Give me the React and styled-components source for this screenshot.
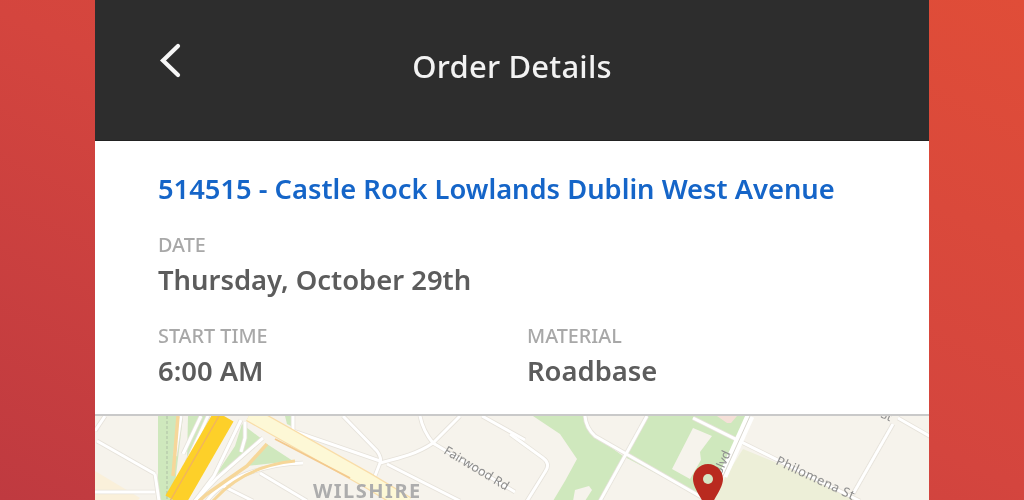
import React from "react";
import styled, { createGlobalStyle } from "styled-components";

const Global = createGlobalStyle`
  html, body { margin: 0; padding: 0; height: 500px; overflow: hidden; }
  body { font-family: "Noto Sans", "Open Sans", sans-serif; }
`;

const Page = styled.div`
  width: 1024px;
  height: 500px;
  display: flex;
  justify-content: center;
  overflow: hidden;
  background: linear-gradient(205deg, #e04d38 0%, #d4453e 50%, #bf3a40 100%);
`;

const Phone = styled.main`
  width: 834px;
  height: 500px;
  display: flex;
  flex-direction: column;
  background: #fff;
`;

const Header = styled.header`
  height: 141px;
  flex: none;
  box-sizing: border-box;
  border-bottom: 1px solid #222;
  background: #2d2d2d;
  display: grid;
  grid-template-columns: 120px 1fr 120px;
  align-items: center;
`;

const Back = styled.button`
  justify-self: start;
  margin: 0 0 0 62px;
  padding: 0;
  border: 0;
  background: none;
  display: flex;
  position: relative;
  top: -9px;
`;

const Title = styled.h1`
  margin: 0;
  text-align: center;
  color: #f2f2f2;
  font-size: 31px;
  font-weight: 500;
  letter-spacing: 0.2px;
  position: relative;
  top: -4px;
  filter: blur(0.5px);
`;

const Details = styled.section`
  height: 275px;
  flex: none;
  box-sizing: border-box;
  padding: 28px 62px 0 63px;
  border-bottom: 2px solid #c9c9c9;
  filter: blur(0.5px);
`;

const OrderLink = styled.a`
  display: block;
  color: #1565c8;
  font-size: 27.3px;
  line-height: 40px;
  font-weight: 600;
  white-space: nowrap;
`;

const Fields = styled.div`
  display: grid;
  grid-template-columns: 369px 1fr;
  row-gap: 18px;
  margin-top: 24px;
`;

const Field = styled.div`
  grid-column: ${(p) => (p.$wide ? "1 / -1" : "auto")};
`;

const Label = styled.div`
  color: #a8a8a8;
  font-size: 19.8px;
  line-height: 24px;
  font-weight: 500;
`;

const Value = styled.div`
  color: #5c5c5c;
  font-size: 27.4px;
  line-height: 46px;
  height: 49px;
  font-weight: 600;
`;

const MapArea = styled.div`
  flex: 1;
  min-height: 0;
  background: #f6f3ec;
  overflow: hidden;
`;

const MapSvg = styled.svg`
  display: block;
  width: 834px;
  height: 84px;
  filter: blur(0.6px);
`;

const ROADS = [
  "M10 0 L0 15",
  "M2 25 L60 58",
  "M198 0 V15 L285 45",
  "M248 0 L282 35 Q287 42 285 47 L278 65",
  "M285 47 C305 42 322 38 338 27 L365 0",
  "M325 0 Q328 15 338 27 L420 76",
  "M387 0 L430 24",
  "M292 48 L365 85",
  "M165 57 L212 85",
  "M128 70 L158 85",
  "M112 85 C128 62 170 48 208 47",
  "M415 18 L448 42 Q456 48 450 56 L432 85",
  "M490 0 Q491 12 500 20 L608 82",
  "M552 0 L505 85",
  "M598 2 L765 85",
  "M798 8 L758 78",
  "M803 2 L836 21",
  "M60 58 L64 85",
  "M86 0 L80 40",
  "M113 0 L92 46",
  "M106 0 L88 38",
  "M146 4 L119 60 L100 85",
  "M150 6 L150 22 L146 36",
  "M168 22 L122 62 L100 85",
  "M0 76 L60 76",
];

function MapArt() {
  const mapText = {
    fontFamily: "'Noto Sans', sans-serif",
    fill: "#8d8d8d",
  };
  return (
    <MapSvg viewBox="0 0 834 84" aria-label="Map">
      <rect width="834" height="85" fill="#f6f3ec" />
      <path d="M0 55 L45 82 L42 85 H0Z" fill="#faf0da" />
      <path d="M63 0 H88 L78 85 H63Z" fill="#cfe8bd" />
      <path d="M93 0 H113 L92 44Z" fill="#cfe8bd" />
      <path d="M147 8 L168 24 L120 60 L140 30Z" fill="#cfe8bd" />
      <path d="M172 28 L198 45 L152 50Z" fill="#cfe8bd" />
      <path d="M190 0 H200 V12 L192 8Z" fill="#cfe8bd" />
      <path d="M438 0 H490 Q491 12 500 20 L528 40 L505 85 H458 L470 65 L482 43 L465 18Z" fill="#cfe8bd" />
      <path d="M478 85 L480 74 L494 70 L497 74 L490 85Z" fill="#f6f3ec" />
      <path d="M552 0 H655 L628 58 L608 82 L528 40Z" fill="#cfe8bd" />
      <path d="M598 12 L617 20 L605 36 L606 44 L595 63 L577 53Z" fill="#f6f3ec" />
      <path d="M622 0 H642 L636 7 H632Z" fill="#f5e0d8" />
      <path d="M648 33 L682 47 L765 85 H615 L628 65Z" fill="#edefd8" />
      <g fill="none" stroke="#e6e2da" strokeWidth="4.600">
        {ROADS.map((d) => <path key={d} d={d} />)}
      </g>
      <g fill="none" stroke="#fff" strokeWidth="3">
        {ROADS.map((d) => <path key={d} d={d} />)}
      </g>
      <path d="M655 0 L628 60" fill="none" stroke="#fff" strokeWidth="9" />
      <path d="M655 0 L628 60" fill="none" stroke="#d9d6ce" strokeWidth="1" />
      <path d="M72 0 V85" stroke="#aebfa5" strokeWidth="1" strokeDasharray="3 2" fill="none" />
      <path d="M83 0 L78 60" stroke="#f6d79a" strokeWidth="3.500" fill="none" />
      <path d="M172 28 L152 50 L112 78 L104 85" stroke="#f6d79a" strokeWidth="3.500" fill="none" />
      <path d="M200 45 C170 48 140 60 118 85" stroke="#f6d79a" strokeWidth="3" fill="none" />
      <path d="M129 0 L80 85" stroke="#fdd029" strokeWidth="22" fill="none" />
      <path d="M124 0 L75 85" stroke="#f2b45e" strokeWidth="1.300" fill="none" />
      <path d="M155 -2 L272 64 L312 88" stroke="#f9dda8" strokeWidth="16" fill="none" />
      <path d="M155 -2 L272 64 L312 88" stroke="#fdf8d6" strokeWidth="13.500" fill="none" />
      <path d="M180 23 L255 62" stroke="#f3c98d" strokeWidth="1.800" fill="none" />
      <text x="218" y="82" fontSize="20" fontWeight="700" letterSpacing="1.500" style={{ ...mapText, fill: "#adadad" }}>WILSHIRE</text>
      <text x="348" y="37" fontSize="12.500" transform="rotate(31 348 37)" style={mapText}>Fairwood Rd</text>
      <text x="680" y="48" fontSize="13" letterSpacing="0.4" transform="rotate(25 680 48)" style={mapText}>Philomena St</text>
      <text x="636" y="37" fontSize="12.500" textAnchor="end" transform="rotate(-66 636 37)" style={mapText}>Blvd</text>
      <text x="785" y="1" fontSize="12" transform="rotate(24 785 1)" style={mapText}>St</text>
      <path d="M613 48 C604.500 48 598 55 598 63 C598 72 607 82 613 96 C619 82 628 72 628 63 C628 55 621.500 48 613 48Z" fill="#b92a1f" />
      <circle cx="613" cy="63" r="5" fill="#d6e6c4" />
    </MapSvg>
  );
}

export default function App() {
  return (
    <Page>
      <Global />
      <Phone>
        <Header>
          <Back aria-label="Back">
            <svg width="26" height="38" viewBox="0 0 26 38" fill="none">
              <path d="M21 4 L6 18.500 L21 33" stroke="#f6f6f6" strokeWidth="4.200" strokeLinecap="round" strokeLinejoin="miter" />
            </svg>
          </Back>
          <Title>Order Details</Title>
          <span />
        </Header>
        <Details>
          <OrderLink>514515 - Castle Rock Lowlands Dublin West Avenue</OrderLink>
          <Fields>
            <Field $wide>
              <Label>DATE</Label>
              <Value>Thursday, October 29th</Value>
            </Field>
            <Field>
              <Label>START TIME</Label>
              <Value>6:00 AM</Value>
            </Field>
            <Field>
              <Label>MATERIAL</Label>
              <Value>Roadbase</Value>
            </Field>
          </Fields>
        </Details>
        <MapArea>
          <MapArt />
        </MapArea>
      </Phone>
    </Page>
  );
}
